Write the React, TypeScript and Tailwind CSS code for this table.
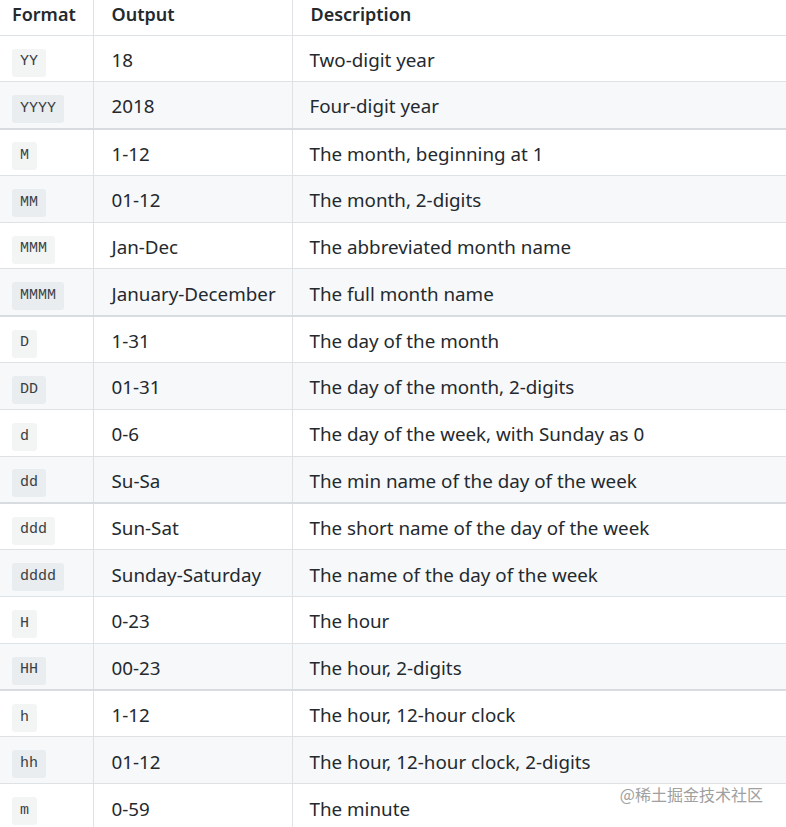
import React from 'react';

const rows: [string, string, string][] = [
  ['YY', '18', 'Two-digit year'],
  ['YYYY', '2018', 'Four-digit year'],
  ['M', '1-12', 'The month, beginning at 1'],
  ['MM', '01-12', 'The month, 2-digits'],
  ['MMM', 'Jan-Dec', 'The abbreviated month name'],
  ['MMMM', 'January-December', 'The full month name'],
  ['D', '1-31', 'The day of the month'],
  ['DD', '01-31', 'The day of the month, 2-digits'],
  ['d', '0-6', 'The day of the week, with Sunday as 0'],
  ['dd', 'Su-Sa', 'The min name of the day of the week'],
  ['ddd', 'Sun-Sat', 'The short name of the day of the week'],
  ['dddd', 'Sunday-Saturday', 'The name of the day of the week'],
  ['H', '0-23', 'The hour'],
  ['HH', '00-23', 'The hour, 2-digits'],
  ['h', '1-12', 'The hour, 12-hour clock'],
  ['hh', '01-12', 'The hour, 12-hour clock, 2-digits'],
  ['m', '0-59', 'The minute'],
];

export default function App() {
  return (
    <div
      className="relative w-[786px] h-[827px] overflow-hidden bg-white text-[#24292e]"
      style={{ fontFamily: '"Noto Sans", "Open Sans", sans-serif' }}
    >
      <table className="w-full border-collapse table-fixed text-[18.8px]">
        <colgroup>
          <col className="w-[93px]" />
          <col className="w-[199px]" />
          <col />
        </colgroup>
        <thead>
          <tr className="h-[35px] border-b border-[#dfe2e5] text-[18px]">
            <th className="border-r border-[#dfe2e5] pl-3 pb-[6px] text-left font-semibold">Format</th>
            <th className="border-r border-[#dfe2e5] pl-[18px] pb-[6px] text-left font-semibold">Output</th>
            <th className="pl-[18px] pb-[6px] text-left font-semibold">Description</th>
          </tr>
        </thead>
        <tbody>
          {rows.map(([fmt, out, desc], i) => (
            <tr
              key={fmt}
              className={
                'h-[46.8px] ' +
                (i % 4 === 1 ? 'border-b-2 border-[#d8dbdf] ' : 'border-b border-[#dfe2e5] ') +
                (i % 2 === 1 ? 'bg-[#f6f8fa]' : 'bg-white')
              }
            >
              <td className="border-r border-[#dfe2e5] pl-3 pt-1">
                <code
                  className="inline-flex h-[28px] items-center rounded-[3px] bg-[#1b1f230d] px-2 text-[15px] font-normal text-[#3a3f44]"
                  style={{ fontFamily: '"Liberation Mono", monospace' }}
                >
                  {fmt}
                </code>
              </td>
              <td className="border-r border-[#dfe2e5] pl-[18px] pt-[3px] whitespace-nowrap">{out}</td>
              <td className="pl-[17px] pt-[3px] whitespace-nowrap">{desc}</td>
            </tr>
          ))}
        </tbody>
      </table>
      <div
        className="absolute right-[23px] top-[782px] text-[16px] text-[#a0a0a0]"
        style={{ fontFamily: '"Noto Sans CJK SC", sans-serif' }}
      >
        @稀土掘金技术社区
      </div>
    </div>
  );
}
